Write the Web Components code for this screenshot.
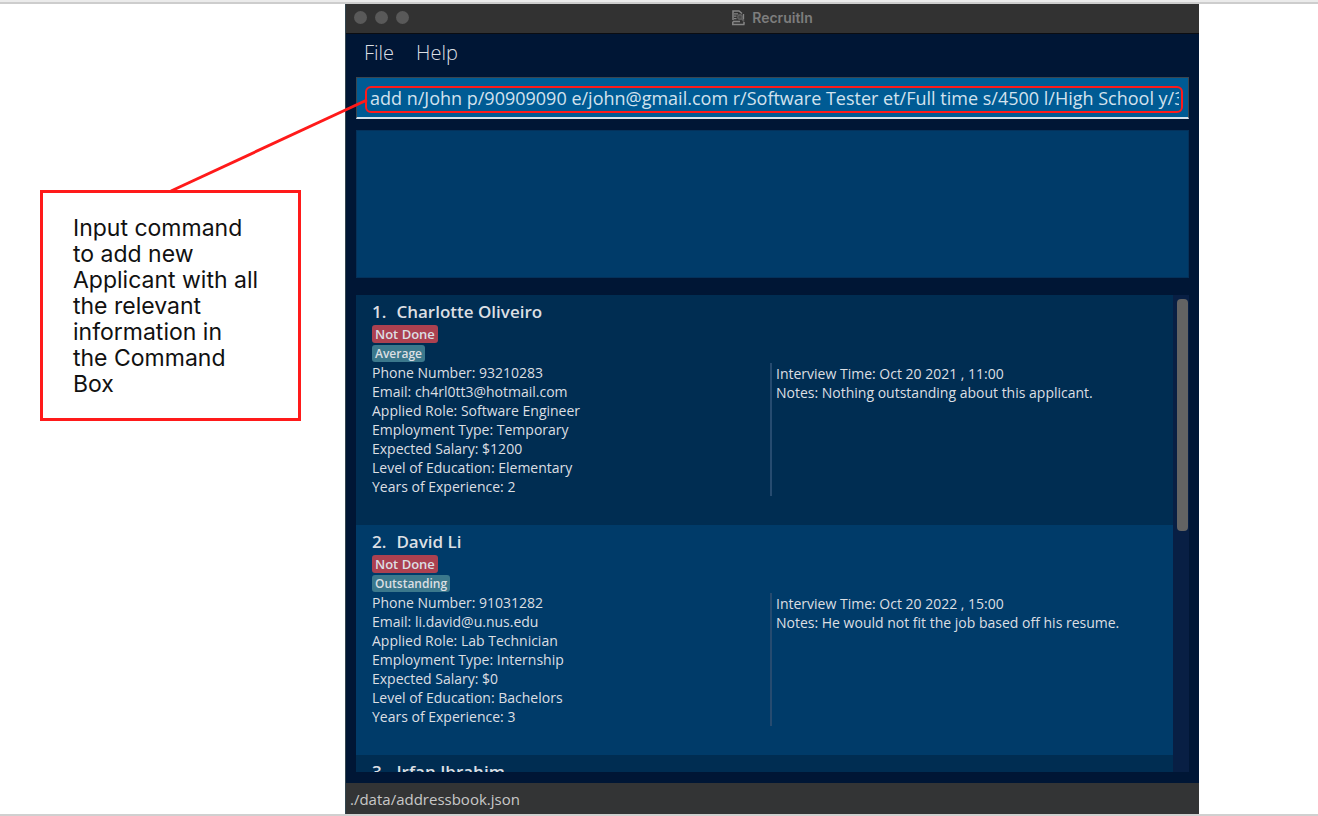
<!DOCTYPE html>
<html lang="en">
<head>
<meta charset="utf-8">
<title>RecruitIn</title>
<style>
body { margin: 0; background: #fff; font-family: "Open Sans", sans-serif; }
</style>
</head>
<body>
<guide-page>
  <call-out slot="note">Input command<br>to add new<br>Applicant with all<br>the relevant<br>information in<br>the Command<br>Box</call-out>
  <app-window>
    <title-bar slot="title">RecruitIn</title-bar>
    <menu-bar slot="menu"></menu-bar>
    <command-box value="add n/John p/90909090 e/john@gmail.com r/Software Tester et/Full time s/4500 l/High School y/3"></command-box>
    <result-display></result-display>
    <applicant-list>
      <applicant-card number="1" name="Charlotte Oliveiro" status="Not Done" rating="Average">
        <li>Phone Number: 93210283</li>
        <li>Email: ch4rl0tt3@hotmail.com</li>
        <li>Applied Role: Software Engineer</li>
        <li>Employment Type: Temporary</li>
        <li>Expected Salary: $1200</li>
        <li>Level of Education: Elementary</li>
        <li>Years of Experience: 2</li>
        <li slot="interview">Interview Time: Oct 20 2021 , 11:00</li>
        <li slot="interview">Notes: Nothing outstanding about this applicant.</li>
      </applicant-card>
      <applicant-card number="2" name="David Li" status="Not Done" rating="Outstanding">
        <li>Phone Number: 91031282</li>
        <li>Email: li.david@u.nus.edu</li>
        <li>Applied Role: Lab Technician</li>
        <li>Employment Type: Internship</li>
        <li>Expected Salary: $0</li>
        <li>Level of Education: Bachelors</li>
        <li>Years of Experience: 3</li>
        <li slot="interview">Interview Time: Oct 20 2022 , 15:00</li>
        <li slot="interview">Notes: He would not fit the job based off his resume.</li>
      </applicant-card>
      <applicant-card number="3" name="Irfan Ibrahim"></applicant-card>
    </applicant-list>
    <status-bar slot="status">./data/addressbook.json</status-bar>
  </app-window>
</guide-page>
<script>
const define = (tag, html, setup) => customElements.define(tag, class extends HTMLElement {
  constructor() {
    super();
    const t = document.createElement('template');
    t.innerHTML = html;
    this.attachShadow({ mode: 'open' }).append(t.content.cloneNode(true));
  }
  connectedCallback() { if (setup) setup(this, this.shadowRoot); }
});

define('guide-page', `
<style>
:host { display: grid; grid-template-columns: minmax(0, 345fr) minmax(0, 854fr) minmax(0, 119fr);
  box-sizing: border-box; height: 100vh; border-top: 2px solid #ebebeb; border-bottom: 2px solid #d0d0d0; }
aside, main, .margin { border-top: 2px solid #cdcdcd; min-height: 0; }
aside { padding: 186px 44px 0 40px; position: relative; z-index: 1; }
main { display: grid; }
</style>
<aside><slot name="note"></slot></aside>
<main><slot></slot></main>
<div class="margin"></div>`);

define('call-out', `
<style>
:host { display: block; position: relative; box-sizing: border-box; padding: 22px 0 21px 30px;
  border: 3px solid #ff1a1a; color: #111; font: 400 23px/26px Inter, sans-serif; white-space: nowrap; }
p { margin: 0; }
svg { position: absolute; left: 50%; bottom: calc(100% + 3px); width: 196px; height: 90px; overflow: visible; }
</style>
<svg viewBox="0 0 196 90" aria-hidden="true"><path d="M0 91 196 0" stroke="#ff1a1a" stroke-width="3" fill="none"/></svg>
<p><slot></slot></p>`);

define('app-window', `
<style>
:host { display: flex; flex-direction: column; min-height: 0; background: #001635; color: #dcdfe3; border-left: 1px solid #33464f; }
.content { flex: 1; min-height: 0; display: flex; flex-direction: column; padding: 0 10px 11px; }
</style>
<slot name="title"></slot><slot name="menu"></slot>
<div class="content"><slot></slot></div>
<slot name="status"></slot>`);

define('title-bar', `
<style>
:host { display: grid; grid-template-columns: 1fr auto 1fr; align-items: center; height: 30px; box-sizing: border-box;
  border-bottom: 1px solid #0b0d12; padding-bottom: 2px; background: #323232; color: #7d7d7d; font: 600 14px/20px Inter, sans-serif; }
.lights { display: flex; gap: 8px; padding-left: 8px; }
.lights i { width: 13px; height: 13px; border-radius: 50%; background: #595959; }
.name { display: flex; align-items: center; gap: 6px; }
svg { width: 14px; height: 16px; }
</style>
<div class="lights"><i></i><i></i><i></i></div>
<div class="name">
<svg viewBox="0 0 14 16" aria-hidden="true" fill="none" stroke="#858585"><path d="M1 10V1H7L10 3.5M0 14.5H12.5M.8 11.5V14.5M12 12V14.5" stroke-width="1.5"/><path d="M2 3.8H6M2 6.2H4.5M2 8.6H4.5" stroke-width="1.2"/><path d="M1 11.5H8" stroke-width="1.6"/><circle cx="8" cy="7" r="2.2" stroke="#606060" fill="#4a4a4a" stroke-width="1.4"/><path d="M9.5 8.5 12 11.5" stroke="#5c5c5c" stroke-width="1.8"/><path d="M11.5 4V9.5" stroke-width="1.3"/></svg>
<span><slot></slot></span></div><span></span>`);

define('menu-bar', `
<style>
:host { display: block; }
nav { display: flex; gap: 22px; height: 43px; box-sizing: border-box; padding: 5px 18px 0; }
button { height: 28px; padding: 0; border: 0; background: none; color: #dcdfe3; font: 300 20px/28px "Open Sans", sans-serif; }
</style>
<nav><button type="button">File</button><button type="button">Help</button></nav>`);

define('command-box', `
<style>
:host { display: block; position: relative; height: 42px; box-sizing: border-box; background: #005b94;
  border: 1px solid #3a4650; border-bottom: 2px solid #d5e2ec; padding: 0 9px 0 13px; }
input { display: block; width: 100%; height: 39px; box-sizing: border-box; margin: 0; padding: 0; border: 0; outline: 0;
  background: none; color: #d3e2ee; font: 400 18px/38px "Open Sans", sans-serif; }
.ring { position: absolute; inset: 8px 5px 4px 8px; border: 2px solid #ff1a1a; border-radius: 6px; pointer-events: none; }
</style>
<input type="text" aria-label="Command"><div class="ring"></div>`,
(el, root) => { root.querySelector('input').value = el.getAttribute('value'); });

define('result-display', `
<style>
:host { display: block; height: 148px; margin: 11px 0 17px; box-sizing: border-box; background: #003b69; border: 1px solid #04315a; }
</style>
<output aria-label="Result"></output>`);

define('applicant-list', `
<style>
:host { flex: 1; min-height: 0; display: grid; grid-template-columns: minmax(0, 1fr) 16px; overflow: hidden; }
.cards { min-height: 0; overflow: hidden; }
.track { background: #081f44; padding: 4px 1px 0 4px; }
.thumb { height: 49%; border-radius: 4px; background: #636363; }
::slotted(:nth-child(odd)) { background: #002d52; }
::slotted(:nth-child(even)) { background: #003b69; }
</style>
<div class="cards"><slot></slot></div>
<div class="track"><div class="thumb"></div></div>`);

define('applicant-card', `
<style>
:host { display: block; height: 230px; box-sizing: border-box; padding: 5px 5px 0 16px; font-size: 14px; line-height: 19px; }
h2 { display: flex; gap: 10px; margin: 0; font-size: 17px; line-height: 24px; font-weight: 600; }
.tags { display: flex; flex-direction: column; align-items: flex-start; gap: 2px; padding: 1px 0; }
.tags span { border-radius: 3px; padding: 0 3px; font-weight: 600; }
.status { background: #ac4150; font-size: 13px; line-height: 18px; }
.rating { background: #3b788c; font-size: 12px; line-height: 17px; }
.tags span:empty { display: none; }
.info { display: grid; grid-template-columns: 1fr 1fr; }
ul { list-style: none; margin: 0; padding: 0; }
.interview { border-left: 2px solid #264b70; padding: 1px 0 0 4px; }
</style>
<h2><span class="number"></span><span class="name"></span></h2>
<div class="tags"><span class="status"></span><span class="rating"></span></div>
<div class="info"><ul><slot></slot></ul><ul class="interview"><slot name="interview"></slot></ul></div>`,
(el, root) => {
  const put = (cls, text) => { root.querySelector(cls).textContent = text || ''; };
  put('.number', el.getAttribute('number') + '.');
  put('.name', el.getAttribute('name'));
  put('.status', el.getAttribute('status'));
  put('.rating', el.getAttribute('rating'));
});

define('status-bar', `
<style>
:host { display: block; height: 31px; padding-left: 4px; background: #333435; color: #c8c8c8; font: 400 15px/32px "Open Sans", sans-serif; }
</style>
<slot></slot>`);
</script>
</body>
</html>
